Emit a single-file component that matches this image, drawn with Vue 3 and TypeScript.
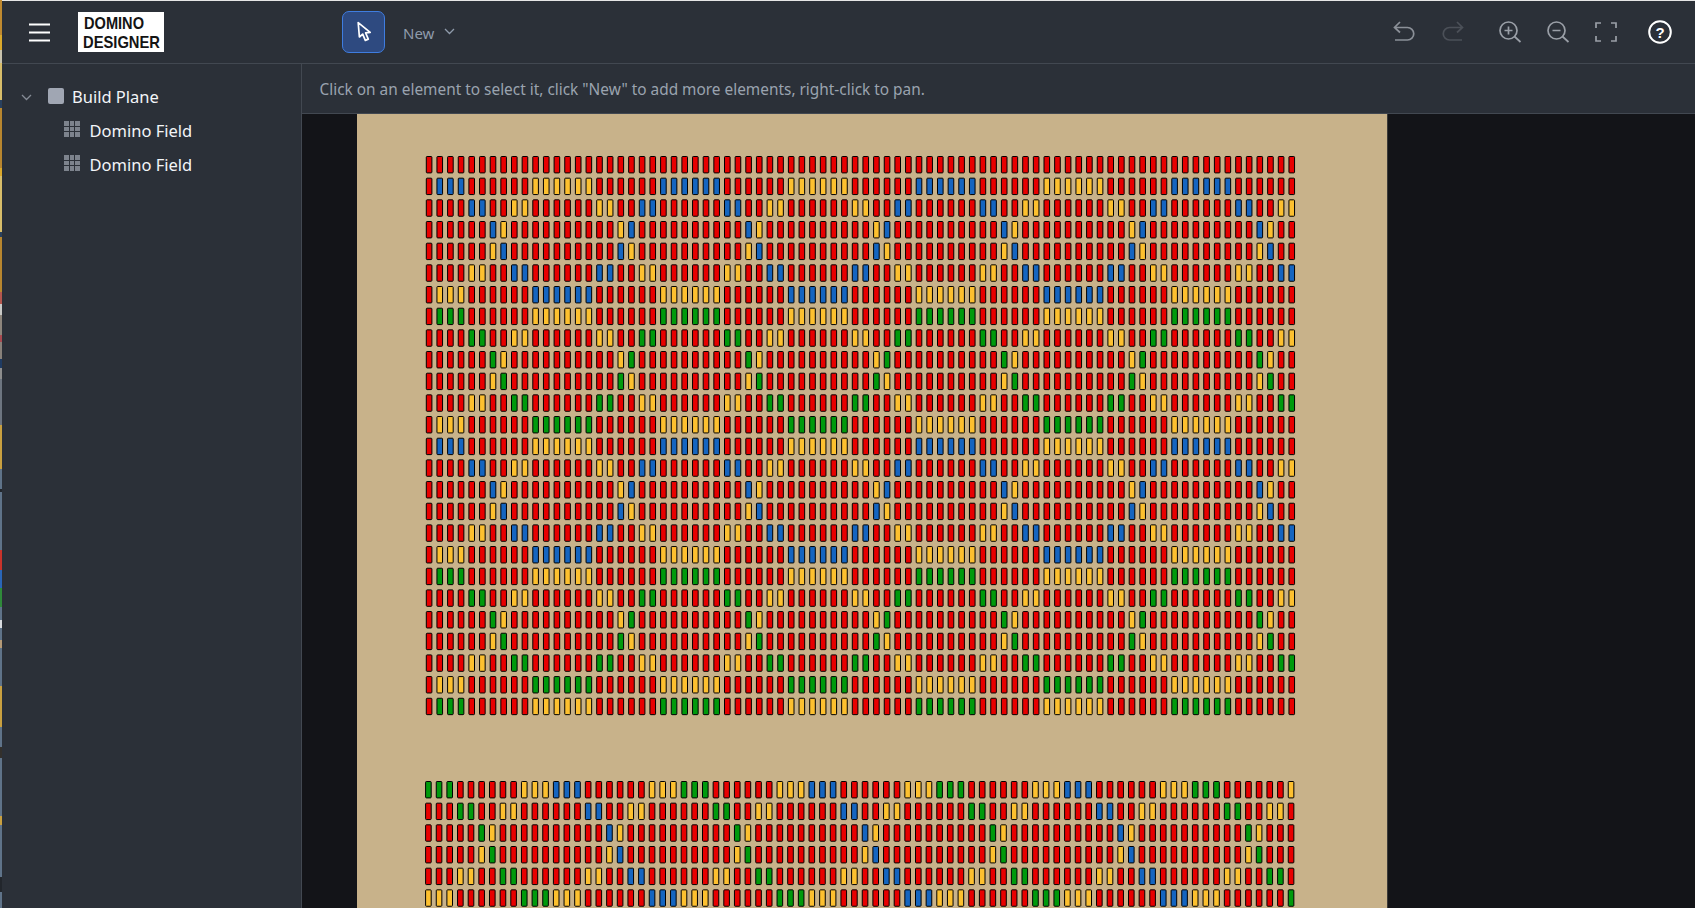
<script setup lang="ts">
type Domino = { id: string; x: number; y: number; fill: string }

const colors: Record<string, string> = {
  R: '#e80000',
  B: '#1565c0',
  Y: '#fdc02f',
  G: '#009a0c',
}

const COLS = 82
const STEP_X = 10.65
const STEP_Y = 21.67

// one period of the ring pattern, A = accent colour of that block
const ringRows = [
  'AAAARRRRRRYYYYYYRRRRRRAA',
  'RRRRAARRYYRRRRRRYYRRAARR',
  'RRRRRRAYRRRRRRRRRRYARRRR',
  'RRRRRRYARRRRRRRRRRAYRRRR',
  'RRRRYYRRAARRRRRRAARRYYRR',
  'YYYYRRRRRRAAAAAARRRRRRYY',
]

const secondRows = [
  'GGGRRRRRRYYYBBBRRRRRRYYY',
  'RRRGGRRYYRRRRRRBBRRYYRRR',
  'RRRRRGYRRRRRRRRRRBYRRRRR',
  'RRRRRYGRRRRRRRRRRYBRRRRR',
  'RRRYYRRGGRRRRRRYYRRBBRRR',
  'YYYRRRRRRGGGYYYRRRRRRBBB',
]

const firstField = (): string[] => {
  const rows = ['R'.repeat(24)]
  for (let r = 1; r < 26; r++) {
    const accent = r <= 6 || (r > 12 && r <= 18) ? 'B' : 'G'
    rows.push(ringRows[(r - 1) % 6].replace(/A/g, accent))
  }
  return rows
}

const build = (rows: string[], left: number, top: number, key: string, redEdge = false): Domino[] => {
  const list: Domino[] = []
  rows.forEach((row, r) => {
    for (let c = 0; c < COLS; c++) {
      list.push({
        id: `${key}-${r}-${c}`,
        x: left + c * STEP_X,
        y: top + r * STEP_Y,
        fill: redEdge && c === 0 ? colors.R : colors[row[c % 24]],
      })
    }
  })
  return list
}

const dominoes = [
  ...build(firstField(), 69.3, 42.5, 'a', true),
  ...build(secondRows, 68.6, 667.5, 'b'),
]
</script>

<template>
  <div class="app">
    <div class="edge"></div>
    <div class="window">
      <header class="topbar">
        <button class="burger" aria-label="Menu">
          <svg width="21" height="19" viewBox="0 0 21 19">
            <path d="M0 1.5h21M0 9.5h21M0 17.5h21" stroke="#fff" stroke-width="2" />
          </svg>
        </button>
        <div class="logo">
          <svg width="86" height="40" viewBox="0 0 86 40">
            <text x="6" y="17" textLength="60" lengthAdjust="spacingAndGlyphs">DOMINO</text>
            <text x="5" y="35.500" textLength="77" lengthAdjust="spacingAndGlyphs">DESIGNER</text>
          </svg>
        </div>
        <button class="tool-active" aria-label="Select">
          <svg width="20" height="22" viewBox="0 0 20 22">
            <path
              d="M4.2 1.6 5.4 16l3.3-2.9 2.6 6.3 3-1.3-2.7-6.2 4.6-.5z"
              fill="#2e4a80"
              stroke="#fff"
              stroke-width="1.7"
              stroke-linejoin="round"
            />
          </svg>
        </button>
        <button class="new-btn">
          <span class="new-label">New</span>
          <svg width="11" height="7" viewBox="0 0 11 7">
            <path d="M1 1l4.5 4.5L10 1" fill="none" stroke="#8f9bab" stroke-width="1.3" />
          </svg>
        </button>
        <div class="actions">
          <svg class="icon undo" width="24" height="24" viewBox="0 0 24 24">
            <path d="M8 3 2.5 8.5 8 13.5M3 8.5h12.5a6 6 0 0 1 0 12.5H3" />
          </svg>
          <svg class="icon redo" width="24" height="24" viewBox="0 0 24 24">
            <path d="M16 3l5.5 5.5L16 13.500M21 8.500H8.500a6 6 0 0 0 0 12.500H21" />
          </svg>
          <svg class="icon zoom-in" width="24" height="24" viewBox="0 0 24 24">
            <circle cx="10.500" cy="10.500" r="8.500" />
            <path d="M10.500 6.500v8M6.500 10.500h8M16.500 16.500l6 5.500" />
          </svg>
          <svg class="icon zoom-out" width="24" height="24" viewBox="0 0 24 24">
            <circle cx="10.500" cy="10.500" r="8.500" />
            <path d="M6.500 10.500h8M16.500 16.500l6 5.500" />
          </svg>
          <svg class="icon full" width="24" height="24" viewBox="0 0 24 24">
            <path d="M2 8V3h5M17 3h5v5M22 16v5h-5M7 21H2v-5" />
          </svg>
          <svg class="help" width="26" height="26" viewBox="0 0 26 26">
            <circle cx="13" cy="13" r="10.800" fill="none" stroke="#fff" stroke-width="2" />
            <text x="13" y="18.500" text-anchor="middle">?</text>
          </svg>
        </div>
      </header>

      <div class="body">
        <aside class="sidebar">
          <div class="tree-row root">
            <svg class="chev" width="11" height="7" viewBox="0 0 11 7">
              <path d="M1 1l4.500 4.500L10 1" fill="none" stroke="#858b95" stroke-width="1.300" />
            </svg>
            <span class="plane"></span>
            <span class="root-label">Build Plane</span>
          </div>
          <div v-for="n in 2" :key="n" class="tree-row leaf">
            <span class="grid-icon"><i v-for="k in 9" :key="k"></i></span>
            <span class="leaf-label">Domino Field</span>
          </div>
        </aside>

        <main class="main">
          <div class="hint"><span class="hint-text">Click on an element to select it, click "New" to add more elements, right-click to pan.</span></div>
          <div class="canvas">
            <div class="board">
              <svg class="dominoes" width="1030" height="794" viewBox="0 0 1030 794">
                <rect
                  v-for="d in dominoes"
                  :key="d.id"
                  :x="d.x"
                  :y="d.y"
                  :fill="d.fill"
                  width="5.600"
                  height="16.400"
                  rx="0.800"
                />
              </svg>
            </div>
          </div>
        </main>
      </div>
    </div>
  </div>
</template>

<style scoped>
.app {
  display: flex;
  width: 1695px;
  height: 908px;
  overflow: hidden;
  font-family: "Noto Sans", "Open Sans", sans-serif;
  background: #2b3038;
}

/* sliver of whatever window sits behind */
.edge {
  flex: 0 0 2px;
  background: linear-gradient(
    to bottom,
    #c08a30 0 35px,
    #dba92c 35px 50px,
    #c9c3ad 50px 63px,
    #d8bd6a 63px 100px,
    #28405f 100px 108px,
    #b8862f 108px 168px,
    #dba92c 168px 176px,
    #d8bd6a 176px 232px,
    #28405f 232px 237px,
    #b8862f 237px 292px,
    #b4574f 292px 304px,
    #c9c9c6 304px 315px,
    #8d857c 315px 335px,
    #a84a50 335px 342px,
    #88817a 342px 359px,
    #1f3b63 359px 368px,
    #8d8d8d 368px 379px,
    #6d7580 379px 425px,
    #c9a040 425px 469px,
    #5f7389 469px 489px,
    #22262c 489px 492px,
    #5f7389 492px 550px,
    #c8332b 550px 570px,
    #2a66b8 570px 588px,
    #2f8a3a 588px 607px,
    #5f7389 607px 620px,
    #d8dbe0 620px 628px,
    #5f7389 628px 640px,
    #b49a78 640px 648px,
    #5f7389 648px 686px,
    #c9a040 686px 727px,
    #5f7389 727px 747px,
    #33302c 747px 758px,
    #5f7389 758px 816px,
    #c9a040 816px 825px,
    #5f7389 825px 877px,
    #22262c 877px 892px,
    #5f7389 892px 908px
  );
}

.window {
  flex: 1;
  display: flex;
  flex-direction: column;
  min-width: 0;
  border-top: 1px solid #e6e6e6;
}

.topbar {
  display: flex;
  align-items: center;
  flex: 0 0 62px;
  padding-left: 27px;
  box-sizing: content-box;
  border-bottom: 1px solid #424851;
}

button {
  border: none;
  background: none;
  padding: 0;
  font: inherit;
  display: flex;
  align-items: center;
}

.burger {
  width: 21px;
  margin-right: 28px;
}

.logo {
  width: 86px;
  height: 40px;
  background: #fff;
  margin-right: 178px;
}

.logo svg {
  display: block;
}

.logo text {
  font-family: "Liberation Sans", sans-serif;
  font-weight: 700;
  font-size: 17px;
  fill: #141414;
}

.tool-active {
  justify-content: center;
  width: 43px;
  height: 42px;
  box-sizing: border-box;
  border: 1.500px solid #3f7de0;
  border-radius: 7px;
  background: #2e4a80;
}

.new-btn {
  gap: 10px;
  margin-left: 18px;
  font-size: 15px;
  color: #8f9bab;
}

.new-label {
  margin-top: 2px;
}

.new-btn svg {
  margin-top: -2px;
}

.actions {
  margin-left: auto;
  display: flex;
  align-items: center;
  padding-right: 22px;
}

.icon {
  fill: none;
  stroke: #9a9fa7;
  stroke-width: 1.700;
}

.undo {
  margin-right: 25px;
  margin-top: -2px;
  stroke: #8b9098;
}

.redo {
  margin-right: 33px;
  margin-top: -2px;
  stroke: #4b5058;
}

.zoom-in,
.zoom-out {
  margin-right: 24px;
}

.full {
  margin-right: 29px;
}

.help text {
  font-family: "Liberation Sans", sans-serif;
  font-weight: 700;
  font-size: 15px;
  fill: #fff;
}

.body {
  flex: 1;
  display: flex;
  min-height: 0;
}

.sidebar {
  flex: 0 0 299px;
  padding-top: 16px;
  border-right: 1px solid #424851;
  color: #f3f5f8;
  font-size: 16.500px;
}

.tree-row {
  display: flex;
  align-items: center;
  height: 34px;
}

.root {
  padding-left: 19px;
}

.root-label {
  margin-bottom: 2px;
}

.chev {
  margin-right: 16px;
}

.plane {
  width: 16px;
  height: 16px;
  margin-right: 8px;
  margin-top: -2px;
  border-radius: 2px;
  background: #a0a6b3;
}

.leaf {
  padding-left: 62px;
}

.leaf-label {
  margin-bottom: 2px;
}

.grid-icon {
  display: grid;
  grid-template-columns: repeat(3, 4.500px);
  grid-auto-rows: 4.500px;
  gap: 1px;
  margin-right: 10px;
  margin-top: -4px;
}

.grid-icon i {
  background: #7d838d;
}

.main {
  flex: 1;
  min-width: 0;
  display: flex;
  flex-direction: column;
}

.hint {
  flex: 0 0 49px;
  display: flex;
  align-items: center;
  padding-left: 17.500px;
  font-size: 15.400px;
  color: #9aa3af;
  border-bottom: 1px solid #424851;
}

.hint-text {
  margin-top: 2px;
}

.canvas {
  flex: 1;
  min-height: 0;
  overflow: hidden;
  padding-left: 55px;
  background: #131418;
}

.board {
  width: 1030px;
  height: 100%;
  overflow: hidden;
  background: #c8b28a;
  border-right: 1px solid #3c3b38;
}

.dominoes {
  display: block;
}

.dominoes rect {
  stroke: #000;
  stroke-width: 1;
}
</style>

<style>
html,
body {
  background: #2b3038;
}
</style>
